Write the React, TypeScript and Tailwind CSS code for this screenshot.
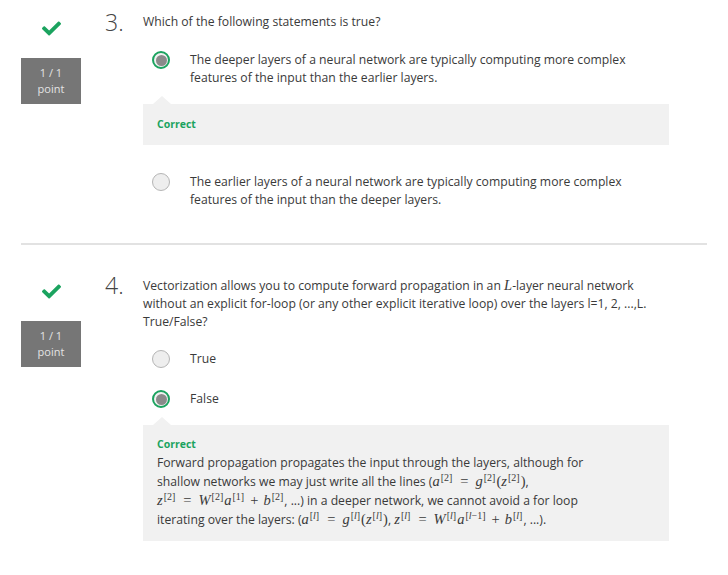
import React from 'react';
import { FaCheck } from 'react-icons/fa';

function Radio({ selected }: { selected?: boolean }) {
  if (selected) {
    return (
      <div className="w-[18px] h-[18px] shrink-0 rounded-full border-[2.5px] border-[#1ba35f] bg-[#f0f0f0] p-[1.5px]">
        <div className="w-full h-full rounded-full bg-[#8a8a8a]" />
      </div>
    );
  }
  return <div className="w-[18px] h-[18px] shrink-0 rounded-full border border-[#b5b5b5] bg-[#eeeeee]" />;
}

function Option({ selected, children, className }: { selected?: boolean; children: React.ReactNode; className?: string }) {
  return (
    <div className={`flex gap-[20px] ml-[9px] ${className ?? ''}`}>
      <Radio selected={selected} />
      <div className="whitespace-nowrap">{children}</div>
    </div>
  );
}

function Feedback({ children, className }: { children: React.ReactNode; className?: string }) {
  return (
    <div className={`relative bg-[#f1f1f1] px-[14px] ${className ?? ''}`}>
      <div className="absolute -top-[8px] left-[10px] w-0 h-0 border-l-[9px] border-r-[9px] border-b-[8px] border-l-transparent border-r-transparent border-b-[#f1f1f1]" />
      {children}
    </div>
  );
}

function Score() {
  return (
    <div className="w-[60px] ml-[21px] shrink-0 flex flex-col items-center">
      <FaCheck className="text-[#1ba35f] mt-[6px]" size={19} />
      <div className="mt-[20px] w-[60px] h-[46px] bg-[#767676] text-[#e4e4e4] text-[11px] leading-[16px] flex flex-col items-center justify-center">
        <span>1 / 1</span>
        <span>point</span>
      </div>
    </div>
  );
}

// small KaTeX-like math pieces
function M({ children }: { children: React.ReactNode }) {
  return <span className="font-['Liberation_Serif',serif] text-[14.5px] text-[#3a3a3a]">{children}</span>;
}
function V({ children }: { children: React.ReactNode }) {
  return <i>{children}</i>;
}
function S({ children }: { children: React.ReactNode }) {
  return <sup className="text-[10px] not-italic -top-[5px] ml-[1px] mr-[1px]">{children}</sup>;
}
function Eq() {
  return <span className="mx-[7px]">=</span>;
}
function Plus() {
  return <span className="mx-[5px]">+</span>;
}

export default function App() {
  return (
    <div className="w-[728px] min-h-[575px] bg-white font-['Open_Sans',sans-serif] text-[12.2px] leading-[18px] text-[#3a3a3a]">
      {/* Question 3 */}
      <div className="flex pt-[13px] pb-[34px]">
        <Score />
        <div className="ml-[24px] w-[38px] text-[23px] font-light leading-[24px] -mt-[3px] text-[#444]">3.</div>
        <div className="w-[526px]">
          <div>Which of the following statements is true?</div>
          <Option selected className="mt-[20px]">
            The deeper layers of a neural network are typically computing more complex
            <br />
            features of the input than the earlier layers.
          </Option>
          <Feedback className="mt-[17px] pt-[13px] pb-[14px]">
            <div className="text-[10.5px] leading-[14px] font-bold text-[#1ba35f]">Correct</div>
          </Feedback>
          <Option className="mt-[28px]">
            The earlier layers of a neural network are typically computing more complex
            <br />
            features of the input than the deeper layers.
          </Option>
        </div>
      </div>

      <div className="mx-[21px] h-[2px] bg-[#e2e2e2]" />

      {/* Question 4 */}
      <div className="flex pt-[31px] pb-[30px]">
        <Score />
        <div className="ml-[24px] w-[38px] text-[23px] font-light leading-[24px] -mt-[3px] text-[#444]">4.</div>
        <div className="w-[526px]">
          <div className="whitespace-nowrap">
            Vectorization allows you to compute forward propagation in an{' '}
            <M>
              <V>L</V>
            </M>
            -layer neural network
            <br />
            without an explicit for-loop (or any other explicit iterative loop) over the layers l=1, 2, ...,L.
            <br />
            True/False?
          </div>
          <Option className="mt-[19px]">True</Option>
          <Option selected className="mt-[22px]">
            False
          </Option>
          <Feedback className="mt-[17px] pt-[12px] pb-[12px]">
            <div className="text-[10.5px] leading-[14px] font-bold text-[#1ba35f]">Correct</div>
            <div className="mt-[2px] leading-[19px] whitespace-nowrap">
              <div>Forward propagation propagates the input through the layers, although for</div>
              <div>
                shallow networks we may just write all the lines (
                <M>
                  <V>a</V>
                  <S>[2]</S>
                  <Eq />
                  <V>g</V>
                  <S>[2]</S>(<V>z</V>
                  <S>[2]</S>)
                </M>
                ,
              </div>
              <div>
                <M>
                  <V>z</V>
                  <S>[2]</S>
                  <Eq />
                  <V>W</V>
                  <S>[2]</S>
                  <V>a</V>
                  <S>[1]</S>
                  <Plus />
                  <V>b</V>
                  <S>[2]</S>
                </M>
                , ...) in a deeper network, we cannot avoid a for loop
              </div>
              <div>
                iterating over the layers: (
                <M>
                  <V>a</V>
                  <S>
                    [<V>l</V>]
                  </S>
                  <Eq />
                  <V>g</V>
                  <S>
                    [<V>l</V>]
                  </S>
                  (<V>z</V>
                  <S>
                    [<V>l</V>]
                  </S>
                  )
                </M>
                ,{' '}
                <M>
                  <V>z</V>
                  <S>
                    [<V>l</V>]
                  </S>
                  <Eq />
                  <V>W</V>
                  <S>
                    [<V>l</V>]
                  </S>
                  <V>a</V>
                  <S>
                    [<V>l</V>−1]
                  </S>
                  <Plus />
                  <V>b</V>
                  <S>
                    [<V>l</V>]
                  </S>
                </M>
                , ...).
              </div>
            </div>
          </Feedback>
        </div>
      </div>
    </div>
  );
}
